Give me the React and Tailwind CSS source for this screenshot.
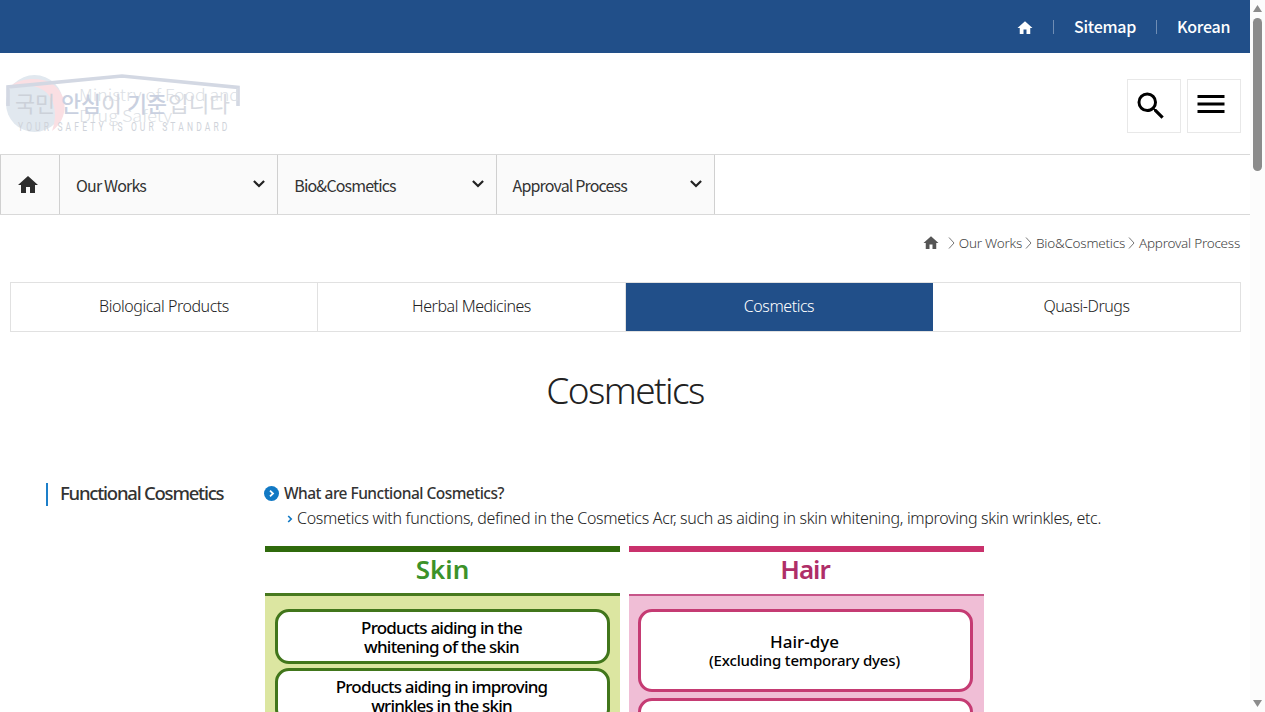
import React from "react";
import { MdHome, MdSearch, MdMenu } from "react-icons/md";

const paths = ["Our Works", "Bio&Cosmetics", "Approval Process"];

const tabs = [
  { label: "Biological Products", width: "w-[307px]" },
  { label: "Herbal Medicines", width: "w-[308px]" },
  { label: "Cosmetics", width: "w-[307px]", active: true },
  { label: "Quasi-Drugs", width: "w-[307px]" },
];

function Chevron() {
  return (
    <svg width="12" height="8" viewBox="0 0 12 8" fill="none" stroke="#222" strokeWidth="2.2">
      <path d="M0.9 1 L6 6 L11.1 1" />
    </svg>
  );
}

function Logo() {
  return (
    <svg width="250" height="70" viewBox="0 0 250 70" className="block">
      <circle cx="34.500" cy="38.500" r="28.500" fill="#e1e8ef" />
      <path d="M12 20 C22 13 40 12 51 18 C68 28 70 53 52 66 C57 52 56 38 47 28 C38 20 26 19 12 20 Z" fill="#fadfe3" />
      <path d="M8 41 V22 L122 11 L238 22.500 V41" fill="none" stroke="#d3d8e3" strokeWidth="3.600" />
      <g fontFamily="'Noto Sans CJK KR', sans-serif" fill="#dcdfe5" fontSize="16" fontWeight="300">
        <text x="79" y="36" textLength="161" lengthAdjust="spacingAndGlyphs">Ministry of Food and</text>
        <text x="79" y="56.500" textLength="93" lengthAdjust="spacingAndGlyphs">Drug Safety</text>
      </g>
      <g fontFamily="'Noto Sans CJK KR', sans-serif" fontSize="22">
        <text x="15" y="47" textLength="40" lengthAdjust="spacingAndGlyphs" fill="#ccd1d9">국민</text>
        <text x="61" y="47" textLength="40" lengthAdjust="spacingAndGlyphs" fill="#c9d0e0" fontWeight="500">안심</text>
        <text x="101" y="47" textLength="21" lengthAdjust="spacingAndGlyphs" fill="#d3d7e0">이</text>
        <text x="127" y="47" textLength="40" lengthAdjust="spacingAndGlyphs" fill="#c9d0e0" fontWeight="500">기준</text>
        <text x="168" y="47" textLength="62" lengthAdjust="spacingAndGlyphs" fill="#d6d9e0">입니다</text>
      </g>
      <g transform="translate(18 66) scale(0.680 1)">
        <text x="0" y="0" textLength="308" fontFamily="'Roboto', sans-serif" fontSize="12.500" fill="#cfd3da">YOUR SAFETY IS OUR STANDARD</text>
      </g>
    </svg>
  );
}

function Pill({ className, children }) {
  return (
    <div className={"flex shrink-0 flex-col items-center justify-center border-[3px] bg-white text-center text-black " + className}>
      {children}
    </div>
  );
}

export default function App() {
  return (
    <div className="flex h-[712px] w-[1265px] overflow-hidden bg-white font-['Noto_Sans','Noto_Sans_CJK_KR',sans-serif] text-[#333]">
      <div className="flex w-[1250px] shrink-0 flex-col overflow-hidden">
        <div className="flex h-[53px] shrink-0 items-center justify-end bg-[#214f89] pr-5 font-['Noto_Sans_CJK_KR',sans-serif] text-base font-medium tracking-[-0.250px] text-white">
          <MdHome className="mt-[3px] mr-[-1px] h-[18px] w-[18px]" />
          <span className="mr-5 ml-5 h-[14px] w-px bg-[#6f8db4]" />
          <span className="w-[62px] pb-[2px] whitespace-nowrap">Sitemap</span>
          <span className="mr-5 ml-5 h-[14px] w-px bg-[#6f8db4]" />
          <span className="w-[53px] pb-[2px] whitespace-nowrap">Korean</span>
        </div>

        <header className="flex h-[101px] shrink-0 items-start justify-between pr-[9px]">
          <div className="pt-[12px]"><Logo /></div>
          <div className="flex gap-[6px] pt-[26px]">
            <div className="flex h-[54px] w-[54px] border border-[#e8e8e8] pt-[8px] pl-[5px]">
              <MdSearch className="h-9 w-9 text-black" />
            </div>
            <div className="flex h-[54px] w-[54px] border border-[#e8e8e8] pt-[6px] pl-[5px]">
              <MdMenu className="h-9 w-9 text-black" />
            </div>
          </div>
        </header>

        <nav className="flex h-[61px] shrink-0 border-y border-[#d9d9d9] font-['Noto_Sans_CJK_KR',sans-serif] text-base tracking-[-0.85px]">
          <div className="flex w-[60px] items-center border-x border-[#d0d0d0] bg-[#fafafa] pl-[15px]">
            <MdHome className="h-6 w-6 text-[#2d2d2d]" />
          </div>
          {paths.map((p) => (
            <div key={p} className="flex w-[218.300px] items-center justify-between border-r border-[#d0d0d0] bg-[#fafafa] pr-3 pl-4">
              <span className="whitespace-nowrap">{p}</span>
              <span className="pb-[2px]"><Chevron /></span>
            </div>
          ))}
        </nav>

        <div className="flex h-[67px] shrink-0 items-start justify-end pt-[18px] pr-[10px] text-[13.500px] leading-5 font-light tracking-[-0.240px] text-[#444]">
          <MdHome className="mt-[1px] mr-[5px] h-[18px] w-[18px] text-[#555]" />
          {paths.map((p) => (
            <span key={p} className="flex items-center whitespace-nowrap">
              <svg width="8" height="12" viewBox="0 0 8 12" fill="none" stroke="#777" className="mr-[3px] ml-[3px]">
                <path d="M1 0.500 L6 6 L1 11.500" />
              </svg>
              {p}
            </span>
          ))}
        </div>

        <div className="mx-[10px] flex h-[50px] w-[1231px] shrink-0 border border-[#e1e1e1]">
          {tabs.map((t) => (
            <div
              key={t.label}
              className={
                "flex shrink-0 items-center justify-center border-r pb-[2px] text-[16px] font-light tracking-[-0.450px] last:border-r-0 " +
                t.width +
                (t.active ? " border-[#214f89] bg-[#214f89] text-white" : " border-[#e1e1e1] text-[#222]")
              }
            >
              {t.label}
            </div>
          ))}
        </div>

        <h1 className="mt-[29px] h-[59px] shrink-0 text-center text-[37px] leading-[58px] font-light tracking-[-1.600px] text-[#222]">Cosmetics</h1>

        <div className="mt-[60px] flex shrink-0">
          <div className="mt-[3px] ml-[46px] flex h-[23px] w-[218px] items-center border-l-2 border-[#1d7fc9] pl-3">
            <h2 className="pb-[3px] text-[18.500px] font-medium tracking-[-1.220px] whitespace-nowrap">Functional Cosmetics</h2>
          </div>
          <div className="flex flex-col">
            <div className="flex h-[26px] items-center gap-[5px]">
              <svg width="15" height="15" viewBox="0 0 15 15">
                <circle cx="7.500" cy="7.500" r="7.500" fill="#1279c4" />
                <path d="M6 4.700 L9 7.500 L6 10.300" fill="none" stroke="#fff" strokeWidth="1.800" />
              </svg>
              <h3 className="pt-px text-[15.500px] font-medium tracking-[-0.520px] whitespace-nowrap">What are Functional Cosmetics?</h3>
            </div>
            <div className="flex h-[24px] items-center gap-[4px] pl-[23px]">
              <svg width="6" height="8" viewBox="0 0 6 8" fill="none" stroke="#1279c4" strokeWidth="1.700" className="mt-[2px]">
                <path d="M1.200 1 L4.200 4 L1.200 7" />
              </svg>
              <p className="pb-px text-[16px] font-light tracking-[-0.305px] whitespace-nowrap text-[#222]">
                Cosmetics with functions, defined in the Cosmetics Acr, such as aiding in skin whitening, improving skin wrinkles, etc.
              </p>
            </div>

            <div className="mt-[16px] ml-px flex gap-[9px]">
              <section className="w-[355px] border-t-[6px] border-[#2f6a0c]">
                <h4 className="h-[41px] text-center text-[26px] leading-[35px] font-semibold text-[#3c9229]">Skin</h4>
                <div className="flex h-[180px] flex-col gap-[4px] border-t-[3px] border-[#47791f] bg-[#dce6a1] px-[10px] pt-[13px]">
                  <Pill className="h-[55px] rounded-[14px] border-[#41761b] pr-[2px] text-[17px] leading-[19px] font-medium tracking-[-0.780px]">
                    <span>Products aiding in the</span>
                    <span>whitening of the skin</span>
                  </Pill>
                  <Pill className="h-[55px] rounded-[14px] border-[#41761b] pr-[2px] text-[17px] leading-[19px] font-medium tracking-[-0.800px]">
                    <span>Products aiding in improving</span>
                    <span>wrinkles in the skin</span>
                  </Pill>
                </div>
              </section>
              <section className="w-[355px] border-t-[6px] border-[#c9316c]">
                <h4 className="h-[42px] pr-[3px] text-center text-[26px] leading-[35px] font-semibold tracking-[-1px] text-[#af2e68]">Hair</h4>
                <div className="flex h-[180px] flex-col gap-[6px] border-t-2 border-[#c65589] bg-[#f0bed6] pt-[13px] pr-[11px] pl-[9px]">
                  <Pill className="h-[83px] rounded-[14px] border-[#c53b73] pr-[2px] font-medium">
                    <span className="text-[17px] leading-[20px]">Hair-dye</span>
                    <span className="text-[15px] leading-[17px] tracking-[-0.170px]">(Excluding temporary dyes)</span>
                  </Pill>
                  <Pill className="h-[83px] rounded-[14px] border-[#c53b73]" />
                </div>
              </section>
            </div>
          </div>
        </div>
      </div>

      <div className="flex w-[15px] shrink-0 flex-col items-center bg-[#fcfcfc]">
        <svg width="15" height="18" viewBox="0 0 15 18"><path d="M7.500 5 L12 12 H3 Z" fill="#8b8b8b" /></svg>
        <div className="h-[153px] w-[9px] rounded-full bg-[#8b8b8b]" />
        <div className="flex-1" />
        <svg width="15" height="18" viewBox="0 0 15 18"><path d="M3 6 H12 L7.500 13 Z" fill="#8b8b8b" /></svg>
      </div>
    </div>
  );
}
